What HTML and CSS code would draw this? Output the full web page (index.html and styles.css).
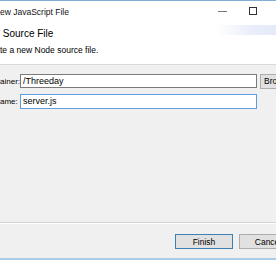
FILE: index.html
```html
<!DOCTYPE html>
<html lang="en">
<head>
    <meta charset="UTF-8">
    <title>New JavaScript File</title>
    <link rel="stylesheet" href="styles.css">
</head>
<body>
    <div class="window">
        <div class="titlebar">
            <span class="title">ew JavaScript File</span>
            <div class="controls">
                <span class="ctl-min"></span>
                <span class="ctl-max"></span>
            </div>
        </div>

        <div class="banner">
            <div class="banner-text">
                <h1>&nbsp;Source File</h1>
                <p>te a new Node source file.</p>
            </div>
            <div class="banner-img"></div>
        </div>

        <div class="content">
            <div class="form-row">
                <label for="container">ainer:</label>
                <input type="text" id="container" value="/Threeday">
                <button type="button" class="btn btn-browse">Browse...</button>
            </div>
            <div class="form-row">
                <label for="fileName">ame:</label>
                <input type="text" id="fileName" class="focused" value="server.js">
            </div>
        </div>

        <div class="button-bar">
            <button type="button" class="btn btn-default">Finish</button>
            <button type="button" class="btn">Cancel</button>
        </div>
    </div>
</body>
</html>
```

FILE: styles.css
```css
* { margin: 0; padding: 0; box-sizing: border-box; }
html, body { width: 276px; height: 260px; overflow: hidden; }
body {
    font-family: 'Liberation Sans', Arial, sans-serif;
    font-size: 8.5px; color: #000; background: #f0f0f0;
}
.window {
    height: 260px; display: flex; flex-direction: column;
    border-top: 1px solid #86aed3; border-bottom: 2px solid #a9cbe8;
    overflow: hidden;
}
.titlebar {
    height: 20px; background: #fff; display: flex; align-items: center;
    justify-content: space-between; flex-shrink: 0;
}
.titlebar .title { font-size: 8.5px; color: #111; margin-top: 2px; }
.controls { display: flex; align-items: center; gap: 22px; width: 58px; }
.ctl-min { width: 9px; height: 1px; background: #777; margin-top: 1px; }
.ctl-max { width: 8px; height: 8px; border: 1px solid #333; margin-top: -1px; }

.banner {
    height: 44px; background: #fff; border-bottom: 1px solid #d9d9d9;
    display: flex; justify-content: space-between; flex-shrink: 0;
}
.banner-text { padding-top: 6px; }
.banner h1 { font-size: 10px; font-weight: normal; line-height: 13px; margin-bottom: 5px; }
.banner p { font-size: 8.5px; line-height: 11px; }
.banner-img {
    width: 60px; height: 10px; margin-top: 4px;
    background: linear-gradient(90deg, rgba(235,240,252,0) 0%, #e9eefa 60%, #e4eaf8 100%);
}

.content { flex: 1; padding-top: 9px; display: flex; flex-direction: column; gap: 6px; }
.form-row { display: flex; align-items: center; height: 14px; }
.form-row label { width: 20px; flex-shrink: 0; font-size: 8px; white-space: nowrap; }
.form-row input {
    width: 237px; height: 14px; border: 1px solid #7a7a7a; background: #fff;
    font-family: inherit; font-size: 9px; padding: 0 2px; outline: none; flex-shrink: 0;
}
.form-row input.focused { border-color: #5b9fe0; height: 15px; }

.btn {
    font-family: inherit; font-size: 8.5px; background: #e1e1e1;
    border: 1px solid #adadad; color: #000; height: 15px; flex-shrink: 0;
}
.btn-browse { width: 40px; margin-left: 3px; text-align: left; padding-left: 3px; }
.btn-default { border-color: #3c7fb1; }

.button-bar {
    height: 36px; flex-shrink: 0; border-top: 1px solid #d4d4d4;
    box-shadow: inset 0 1px 0 #fff;
    display: flex; gap: 6px; padding: 11px 0 0 175px;
}
.button-bar .btn { width: 58px; }
```
